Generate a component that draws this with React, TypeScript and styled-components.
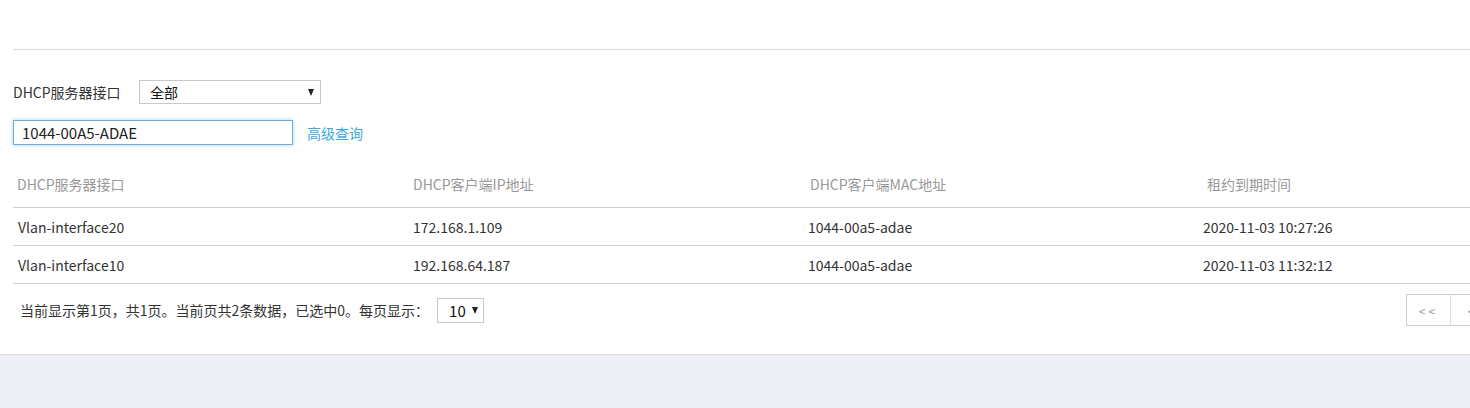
import React from 'react'
import styled, { createGlobalStyle } from 'styled-components'

const GlobalStyle = createGlobalStyle`
  html, body {
    margin: 0;
    padding: 0;
    overflow: hidden;
    background: #eeeef5;
  }
  body {
    font-family: "Noto Sans CJK SC", "Noto Sans", sans-serif;
    font-size: 14px;
    color: #333;
  }
`

const Panel = styled.div`
  width: 1580px;
  background: #fff;
  border-bottom: 1px solid #dcdcdc;
  padding: 0 0 28px 13px;
`

const TopBar = styled.div`
  height: 49px;
  border-bottom: 1px solid #d9d9d9;
`

const FilterRow = styled.div<{ gap: number; top: number }>`
  display: flex;
  align-items: center;
  gap: ${p => p.gap}px;
  margin-top: ${p => p.top}px;
`

const Label = styled.span`
  width: 126px;
  font-size: 14px;
  color: #333;
`

const SelectBox = styled.div<{ w: number }>`
  width: ${p => p.w}px;
  height: 24px;
  box-sizing: border-box;
  border: 1px solid #c8c8c8;
  display: flex;
  align-items: center;
  justify-content: space-between;
  padding: 0 6px 0 10px;
  font-size: 14px;
  color: #111;
`

const Arrow = styled.span`
  width: 0;
  height: 0;
  border-left: 3.5px solid transparent;
  border-right: 3.5px solid transparent;
  border-top: 7px solid #222;
`

const SearchInput = styled.input`
  width: 280px;
  height: 25px;
  box-sizing: border-box;
  border: 1px solid #66afe9;
  box-shadow: 0 0 4px rgba(102, 175, 233, 0.6);
  padding: 0 8px;
  font-family: inherit;
  font-size: 15px;
  color: #222;
  outline: none;
`

const Link = styled.a`
  color: #3ca8dd;
  font-size: 14px;
  cursor: pointer;
`

const Table = styled.table`
  width: 1580px;
  table-layout: fixed;
  border-collapse: collapse;
  margin-top: 20px;
`

const Th = styled.th<{ indent: number }>`
  text-align: left;
  font-weight: normal;
  color: #999;
  font-size: 14px;
  height: 38px;
  padding: 0 0 4px ${p => p.indent}px;
  border-bottom: 1px solid #cfcfcf;
`

const Td = styled.td`
  font-size: 14px;
  color: #333;
  height: 37px;
  padding: 0 5px;
  border-bottom: 1px solid #cfcfcf;
`

const Pager = styled.div`
  display: flex;
  align-items: center;
  justify-content: space-between;
  margin-top: 10px;
  padding-left: 7px;
`

const PagerInfo = styled.div`
  display: flex;
  align-items: center;
  gap: 8px;
  font-size: 14px;
  color: #333;
`

const PageSize = styled(SelectBox)`
  height: 25px;
  padding: 0 5px 0 11px;
  font-size: 15px;
`

const PageButtons = styled.div`
  display: flex;
  border: 1px solid #ccc;
  margin-right: 10px;
`

const PageButton = styled.div`
  width: 43px;
  height: 30px;
  display: flex;
  align-items: center;
  justify-content: center;
  color: #999;
  font-size: 12px;
  letter-spacing: 3px;
  & + & {
    border-left: 1px solid #e0e0e0;
  }
`

const columns = [
  { title: 'DHCP服务器接口', indent: 4 },
  { title: 'DHCP客户端IP地址', indent: 5 },
  { title: 'DHCP客户端MAC地址', indent: 7 },
  { title: '租约到期时间', indent: 9 },
]

const rows = [
  { port: 'Vlan-interface20', ip: '172.168.1.109', mac: '1044-00a5-adae', time: '2020-11-03 10:27:26' },
  { port: 'Vlan-interface10', ip: '192.168.64.187', mac: '1044-00a5-adae', time: '2020-11-03 11:32:12' },
]

export default function App() {
  return (
    <>
      <GlobalStyle />
      <Panel>
        <TopBar />
        <FilterRow gap={0} top={30}>
          <Label>DHCP服务器接口</Label>
          <SelectBox w={182}>
            <span>全部</span>
            <Arrow />
          </SelectBox>
        </FilterRow>
        <FilterRow gap={14} top={16}>
          <SearchInput defaultValue="1044-00A5-ADAE" />
          <Link>高级查询</Link>
        </FilterRow>
        <Table>
          <thead>
            <tr>
              {columns.map(c => (
                <Th key={c.title} indent={c.indent}>{c.title}</Th>
              ))}
            </tr>
          </thead>
          <tbody>
            {rows.map(r => (
              <tr key={r.port}>
                <Td>{r.port}</Td>
                <Td>{r.ip}</Td>
                <Td>{r.mac}</Td>
                <Td>{r.time}</Td>
              </tr>
            ))}
          </tbody>
        </Table>
        <Pager>
          <PagerInfo>
            <span>当前显示第1页，共1页。当前页共2条数据，已选中0。每页显示：</span>
            <PageSize w={47}>
              <span>10</span>
              <Arrow />
            </PageSize>
          </PagerInfo>
          <PageButtons>
            <PageButton>&lt;&lt;</PageButton>
            <PageButton>&lt;</PageButton>
            <PageButton>&gt;</PageButton>
            <PageButton>&gt;&gt;</PageButton>
          </PageButtons>
        </Pager>
      </Panel>
    </>
  )
}
